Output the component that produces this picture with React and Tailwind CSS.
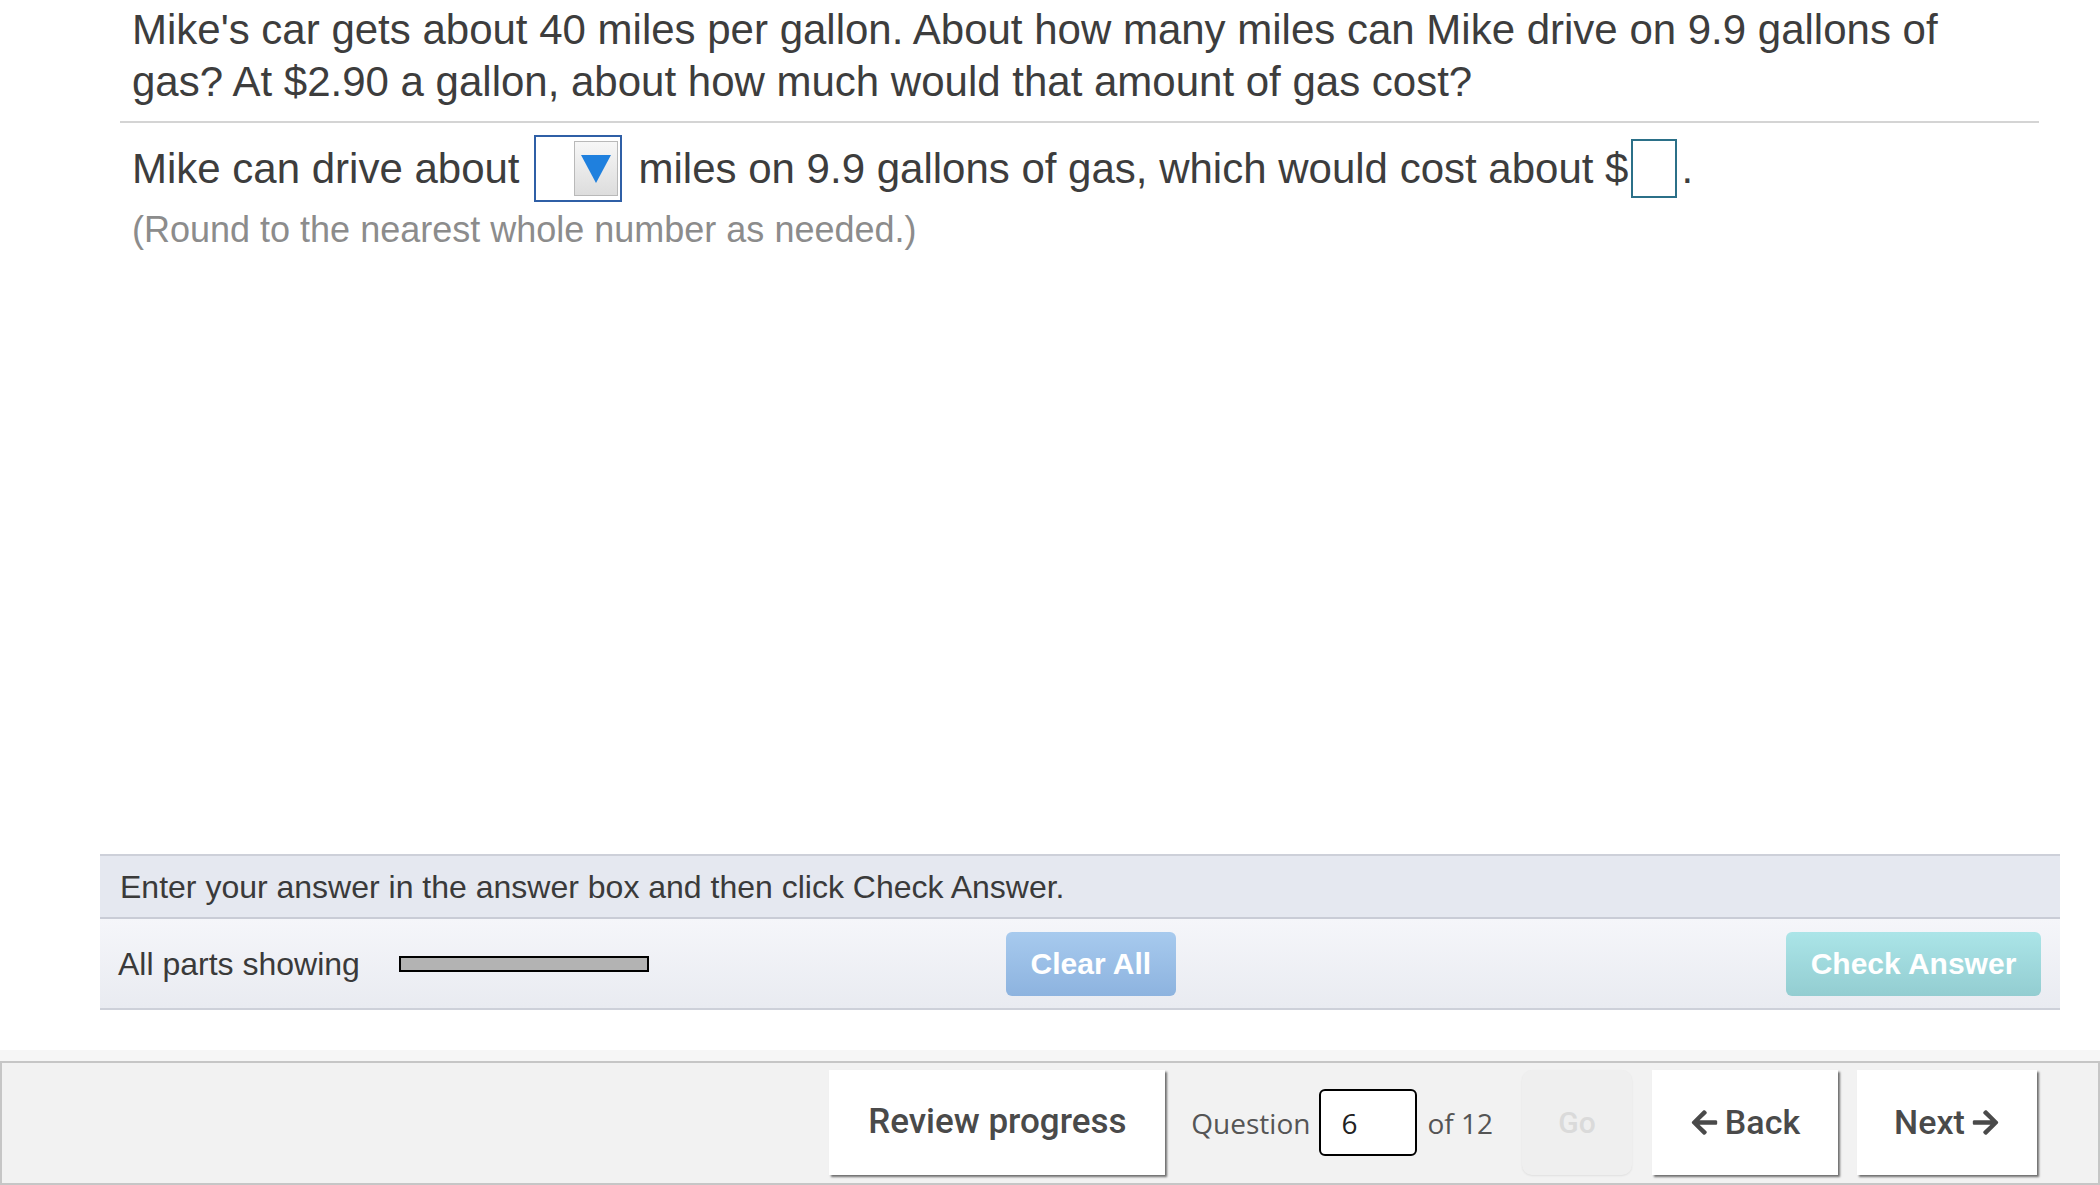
import React from "react";
import { FaArrowLeft, FaArrowRight } from "react-icons/fa";

// Question prompt, answer line and hint
function QuestionBody() {
  return (
    <div className="ml-[120px] mr-[61px] font-['Liberation_Sans',Arial,sans-serif] text-[#3d3d3d]">
      <div className="pl-[12px] pt-[4px] text-[42px] leading-[52px]">
        <div>Mike's car gets about 40 miles per gallon. About how many miles can Mike drive on 9.9 gallons of</div>
        <div>gas? At $2.90 a gallon, about how much would that amount of gas cost?</div>
      </div>
      <div className="mt-[13px] h-[2px] bg-[#d4d4d4]" />
      <div className="mt-[12px] flex h-[67px] items-center pl-[12px] text-[42px] leading-none">
        <span>Mike can drive about</span>
        <div className="ml-[14px] mr-[17px] flex h-[67px] w-[88px] items-center justify-end border-2 border-[#2f5fa6] bg-white pr-[2px]">
          <div className="flex h-[55px] w-[44px] items-center justify-center border border-[#b9b9b9] bg-gradient-to-b from-[#f7f7f7] to-[#dddddd]">
            <svg width="30" height="28" viewBox="0 0 30 28">
              <polygon points="0,0 30,0 15,28" fill="#1f80de" />
            </svg>
          </div>
        </div>
        <span>miles on 9.9 gallons of gas, which would cost about $</span>
        <div className="ml-[3px] h-[59px] w-[46px] border-2 border-[#2b7088] bg-white" />
        <span className="ml-[4px]">.</span>
      </div>
      <div className="mt-[7px] pl-[12px] text-[36px] leading-[41px] text-[#8c8c8c]">
        (Round to the nearest whole number as needed.)
      </div>
    </div>
  );
}

function InstructionPanel() {
  return (
    <div className="ml-[100px] mr-[40px] border-y-2 border-[#cdd0d9] font-['Liberation_Sans',Arial,sans-serif]">
      <div className="flex h-[61px] items-center bg-[#e5e8f0] pl-[20px] text-[32px] text-[#3a3a3a]">
        Enter your answer in the answer box and then click Check Answer.
      </div>
      <div className="h-[2px] bg-[#c9ccd6]" />
      <div className="flex h-[89px] items-center bg-gradient-to-b from-[#f5f6fa] to-[#e9ebf1] pl-[18px] pr-[19px]">
        <span className="text-[32px] text-[#3a3a3a]">All parts showing</span>
        <div className="ml-[39px] h-[16px] w-[250px] border-2 border-black bg-[#b3b3b3]" />
        <button className="ml-[357px] flex h-[64px] w-[170px] items-center justify-center rounded-[6px] bg-gradient-to-b from-[#a7caee] to-[#8db3df] text-[30px] font-bold text-white">
          Clear All
        </button>
        <div className="flex-1" />
        <button className="flex h-[64px] w-[255px] items-center justify-center rounded-[6px] bg-gradient-to-b from-[#abe5e8] to-[#93cdd1] text-[30px] font-bold text-white">
          Check Answer
        </button>
      </div>
    </div>
  );
}

function Footer() {
  const btn =
    "flex h-[105px] items-center justify-center bg-white shadow-[2px_2px_2px_rgba(0,0,0,0.55)] text-[#4a4a4a] font-['Roboto',sans-serif] font-medium";
  return (
    <div className="flex h-[124px] items-start justify-end border-2 border-[#c6c6c6] bg-[#f2f2f2] pr-[61px] pt-[7px] font-['Open_Sans',sans-serif]">
      <button className={`${btn} w-[336px] text-[35px]`}>Review progress</button>
      <div className="ml-[26px] flex h-[105px] items-center text-[28px] text-[#555555]">
        <span>Question</span>
        <div className="ml-[9px] flex h-[67px] w-[98px] items-center rounded-[6px] border-2 border-black bg-white pl-[20px] text-[28px] text-[#222222]">
          6
        </div>
        <span className="ml-[10px]">of 12</span>
      </div>
      <button className="ml-[29px] flex h-[105px] w-[110px] items-center justify-center rounded-[10px] bg-[#efefef] font-['Roboto',sans-serif] text-[30px] font-medium text-[#dadada] shadow-[0_1px_2px_rgba(0,0,0,0.08)]">
        Go
      </button>
      <button className={`${btn} ml-[20px] w-[186px] gap-[6px] text-[34px]`}>
        <FaArrowLeft className="h-[29px] w-[29px]" />
        Back
      </button>
      <button className={`${btn} ml-[19px] w-[180px] gap-[6px] text-[34px]`}>
        Next
        <FaArrowRight className="h-[29px] w-[29px]" />
      </button>
    </div>
  );
}

export default function App() {
  return (
    <div className="flex h-[1185px] w-[2100px] flex-col overflow-hidden bg-white">
      <QuestionBody />
      <div className="flex-1" />
      <InstructionPanel />
      <div className="h-[40px]" />
      <div className="h-[11px] bg-[#f6f6f6]" />
      <Footer />
    </div>
  );
}
